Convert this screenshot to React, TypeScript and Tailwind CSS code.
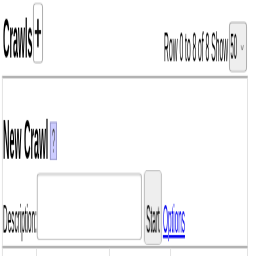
export default function App() {
  return (
    <div className="w-[256px] h-[256px] overflow-hidden bg-white antialiased">
      <div className="w-[1600px] h-[256px] origin-top-left scale-x-[0.16] font-['Liberation_Sans',Arial,sans-serif] text-black">
        <div className="flex h-[76px] pl-[19px] pr-[56px]">
          <div className="flex items-start">
            <h1 className="mt-[8px] text-[56px] font-bold leading-[60px] grayscale">Crawls</h1>
            <button className="mt-[3px] ml-[3px] flex h-[60px] w-[63px] items-center justify-center rounded-[18px/5px] border-y border-x-[6px] border-[#aaa] bg-white" aria-label="Add">
              <svg width="44" height="30" viewBox="0 0 44 30" preserveAspectRatio="none">
                <rect x="17" y="1" width="10" height="28" fill="#111" />
                <rect x="2" y="12" width="40" height="4" fill="#111" />
              </svg>
            </button>
          </div>
          <div className="ml-auto flex items-start grayscale">
            <span className="mt-[23px] text-[42px] leading-[48px]">Row 0 to 8 of 8 Show</span>
            <div className="mt-[22px] ml-[6px] flex h-[50px] w-[113px] items-center justify-between rounded-[18px/5px] border-y border-x-[6px] border-[#aaa] bg-[#eee] pl-[4px] pr-[14px] text-[36px]">
              <span>50</span>
              <svg width="20" height="5" viewBox="0 0 20 5" preserveAspectRatio="none">
                <path d="M1 0 L10 5 L19 0" fill="none" stroke="#555" strokeWidth="1.2" vectorEffect="non-scaling-stroke" />
              </svg>
            </div>
          </div>
        </div>
        <div className="ml-[12px] mr-[50px] h-[172px] border-t-[2px] border-b-[2px] border-x-[6px] border-t-[#999] border-b-[#999] border-x-[#e2e2e2] pl-[1px]">
          <div className="mt-[32px] flex items-start">
            <h2 className="text-[56px] font-bold leading-[60px] grayscale">New Crawl</h2>
            <span className="mt-[12px] ml-[10px] flex h-[38px] w-[44px] items-center justify-center border-y border-x-[6px] border-[#99c] bg-[#ccf] text-[34px] text-[#444]">
              ?
            </span>
          </div>
          <div className="mt-[0px] flex items-start text-[40px] leading-[48px]">
            <span className="mt-[25px] grayscale">Description:</span>
            <div className="mt-[3px] h-[67px] w-[657px] rounded-[18px/4px] border-y border-x-[6px] border-[#bbb] bg-white shadow-[inset_0_2px_2px_rgba(0,0,0,0.12)]" />
            <button className="ml-[12px] flex h-[75px] w-[113px] items-start justify-center rounded-[22px/6px] border-y border-x-[6px] border-[#bbb] bg-[#eee] pt-[24px] text-[40px] leading-[48px] grayscale">
              Start
            </button>
            <a className="mt-[25px] ml-[6px] text-[#00e] underline decoration-[3px]">Options</a>
          </div>
        </div>
        <div className="ml-[12px] mr-[50px] flex h-[10px] border-x-[6px] border-[#e2e2e2]">
          <div className="w-[213px] border-r-[6px] border-[#e2e2e2]" />
          <div className="w-[456px] border-r-[6px] border-[#e2e2e2]" />
          <div className="w-[382px] border-r-[6px] border-[#e2e2e2]" />
          <div className="flex-1" />
        </div>
      </div>
    </div>
  );
}
